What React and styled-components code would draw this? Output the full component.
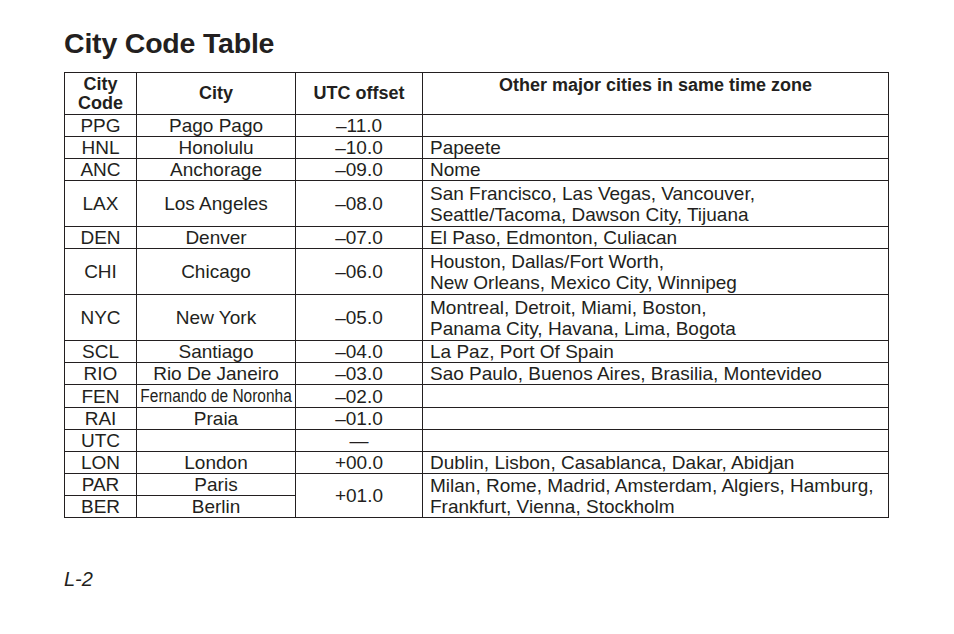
import React from 'react';
import styled, { createGlobalStyle, css } from 'styled-components';

const GlobalStyle = createGlobalStyle`
    html, body {
        margin: 0;
        padding: 0;
        background: #fff;
    }
    body {
        font-family: 'Liberation Sans', Arial, sans-serif;
        color: #231f20;
    }
`;

const Page = styled.div`
    width: 954px;
    height: 634px;
    box-sizing: border-box;
    padding: 27px 0 0 64px;
    display: flex;
    flex-direction: column;
`;

const Title = styled.h1`
    margin: 0 0 12px;
    font-size: 28.5px;
    line-height: 33px;
    font-weight: bold;
    letter-spacing: -0.2px;
`;

const Table = styled.table`
    border-collapse: collapse;
    width: 825px;
    table-layout: fixed;
    font-size: 19px;
    line-height: 21px;
`;

const Head = styled.th`
    border: 1px solid #231f20;
    font-size: 18px;
    font-weight: bold;
    line-height: 18.5px;
    padding: 1px 2px 1px;
    text-align: center;
    vertical-align: ${p => (p.top ? 'top' : 'middle')};
    ${p => p.top && css`padding-top: 3px;`}
`;

const Cell = styled.td`
    border: 1px solid #231f20;
    padding: 0 7px;
    text-align: ${p => (p.left ? 'left' : 'center')};
    vertical-align: middle;
    white-space: nowrap;
`;

const Narrow = styled.span`
    display: inline-block;
    font-size: 18px;
    transform: scaleX(0.86);
    transform-origin: center;
    margin: 0 -20px;
`;

const PageNo = styled.div`
    margin-top: 50px;
    font-size: 20px;
    font-style: italic;
`;

const rows = [
    ['PPG', 'Pago Pago', '–11.0', ''],
    ['HNL', 'Honolulu', '–10.0', 'Papeete'],
    ['ANC', 'Anchorage', '–09.0', 'Nome'],
    ['LAX', 'Los Angeles', '–08.0', 'San Francisco, Las Vegas, Vancouver,\nSeattle/Tacoma, Dawson City, Tijuana'],
    ['DEN', 'Denver', '–07.0', 'El Paso, Edmonton, Culiacan'],
    ['CHI', 'Chicago', '–06.0', 'Houston, Dallas/Fort Worth,\nNew Orleans, Mexico City, Winnipeg'],
    ['NYC', 'New York', '–05.0', 'Montreal, Detroit, Miami, Boston,\nPanama City, Havana, Lima, Bogota'],
    ['SCL', 'Santiago', '–04.0', 'La Paz, Port Of Spain'],
    ['RIO', 'Rio De Janeiro', '–03.0', 'Sao Paulo, Buenos Aires, Brasilia, Montevideo'],
    ['FEN', 'Fernando de Noronha', '–02.0', '', true],
    ['RAI', 'Praia', '–01.0', ''],
    ['UTC', '', '—', ''],
    ['LON', 'London', '+00.0', 'Dublin, Lisbon, Casablanca, Dakar, Abidjan'],
];

const Lines = ({ text }) =>
    text.split('\n').map((line, i) => (
        <React.Fragment key={i}>
            {i > 0 && <br />}
            {line}
        </React.Fragment>
    ));

const App = () => (
    <>
        <GlobalStyle />
        <Page>
            <Title>City Code Table</Title>
            <Table>
                <colgroup>
                    <col style={{ width: 72 }} />
                    <col style={{ width: 159 }} />
                    <col style={{ width: 127 }} />
                    <col />
                </colgroup>
                <thead>
                    <tr style={{ height: 42 }}>
                        <Head>
                            City
                            <br />
                            Code
                        </Head>
                        <Head>City</Head>
                        <Head>UTC offset</Head>
                        <Head top>Other major cities in same time zone</Head>
                    </tr>
                </thead>
                <tbody>
                    {rows.map(([code, city, offset, other, narrow]) => (
                        <tr key={code} style={{ height: other.includes('\n') ? 46 : 22 }}>
                            <Cell>{code}</Cell>
                            <Cell>{narrow ? <Narrow>{city}</Narrow> : city}</Cell>
                            <Cell>{offset}</Cell>
                            <Cell left>
                                <Lines text={other} />
                            </Cell>
                        </tr>
                    ))}
                    <tr style={{ height: 22 }}>
                        <Cell>PAR</Cell>
                        <Cell>Paris</Cell>
                        <Cell rowSpan={2}>+01.0</Cell>
                        <Cell left rowSpan={2}>
                            Milan, Rome, Madrid, Amsterdam, Algiers, Hamburg,
                            <br />
                            Frankfurt, Vienna, Stockholm
                        </Cell>
                    </tr>
                    <tr style={{ height: 22 }}>
                        <Cell>BER</Cell>
                        <Cell>Berlin</Cell>
                    </tr>
                </tbody>
            </Table>
            <PageNo>L-2</PageNo>
        </Page>
    </>
);

export default App;
